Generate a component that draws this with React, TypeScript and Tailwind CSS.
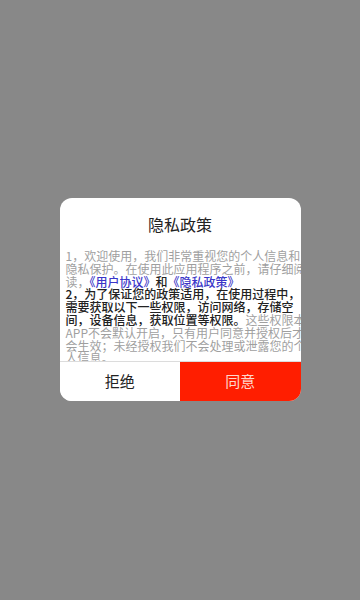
export default function App() {
    return (
        <div
            className="h-[600px] w-[360px] bg-[#888888] flex items-center justify-center"
            style={{ fontFamily: '"Noto Sans CJK SC", "Liberation Sans", sans-serif' }}
        >
            <div className="w-[241px] h-[203px] mt-[-1px] bg-white rounded-[12px] overflow-hidden flex flex-col">
                <div className="h-[52px] shrink-0 flex items-center justify-center text-[16px] text-[#222]">
                    隐私政策
                </div>
                <div className="h-[111px] shrink-0 overflow-hidden">
                    <p className="w-[242px] ml-[6px] text-[12px] leading-[12.8px] text-[#9f9f9f]">
                        1，欢迎使用，我们非常重视您的个人信息和隐私保护。在使用此应用程序之前，请仔细阅读，
                        <span className="text-[#3a36c8] font-medium">《用户协议》</span>
                        <span className="text-[#222] font-medium">和</span>
                        <span className="text-[#3a36c8] font-medium">《隐私政策》</span>
                        <br />
                        <span className="text-[#222] font-medium">
                            2，为了保证您的政策适用，在使用过程中，需要获取以下一些权限，访问网络，存储空间，设备信息，获取位置等权限。
                        </span>
                        这些权限本APP不会默认开启，只有用户同意并授权后才会生效；未经授权我们不会处理或泄露您的个人信息。
                    </p>
                </div>
                <div className="flex flex-1 border-t border-[#dcdcdc]">
                    <button className="flex-1 flex items-center justify-center text-[15px] text-[#222] bg-white">
                        拒绝
                    </button>
                    <button className="flex-1 flex items-center justify-center text-[15px] text-[#ffd6cc] bg-[#ff1e00]">
                        同意
                    </button>
                </div>
            </div>
        </div>
    )
}
